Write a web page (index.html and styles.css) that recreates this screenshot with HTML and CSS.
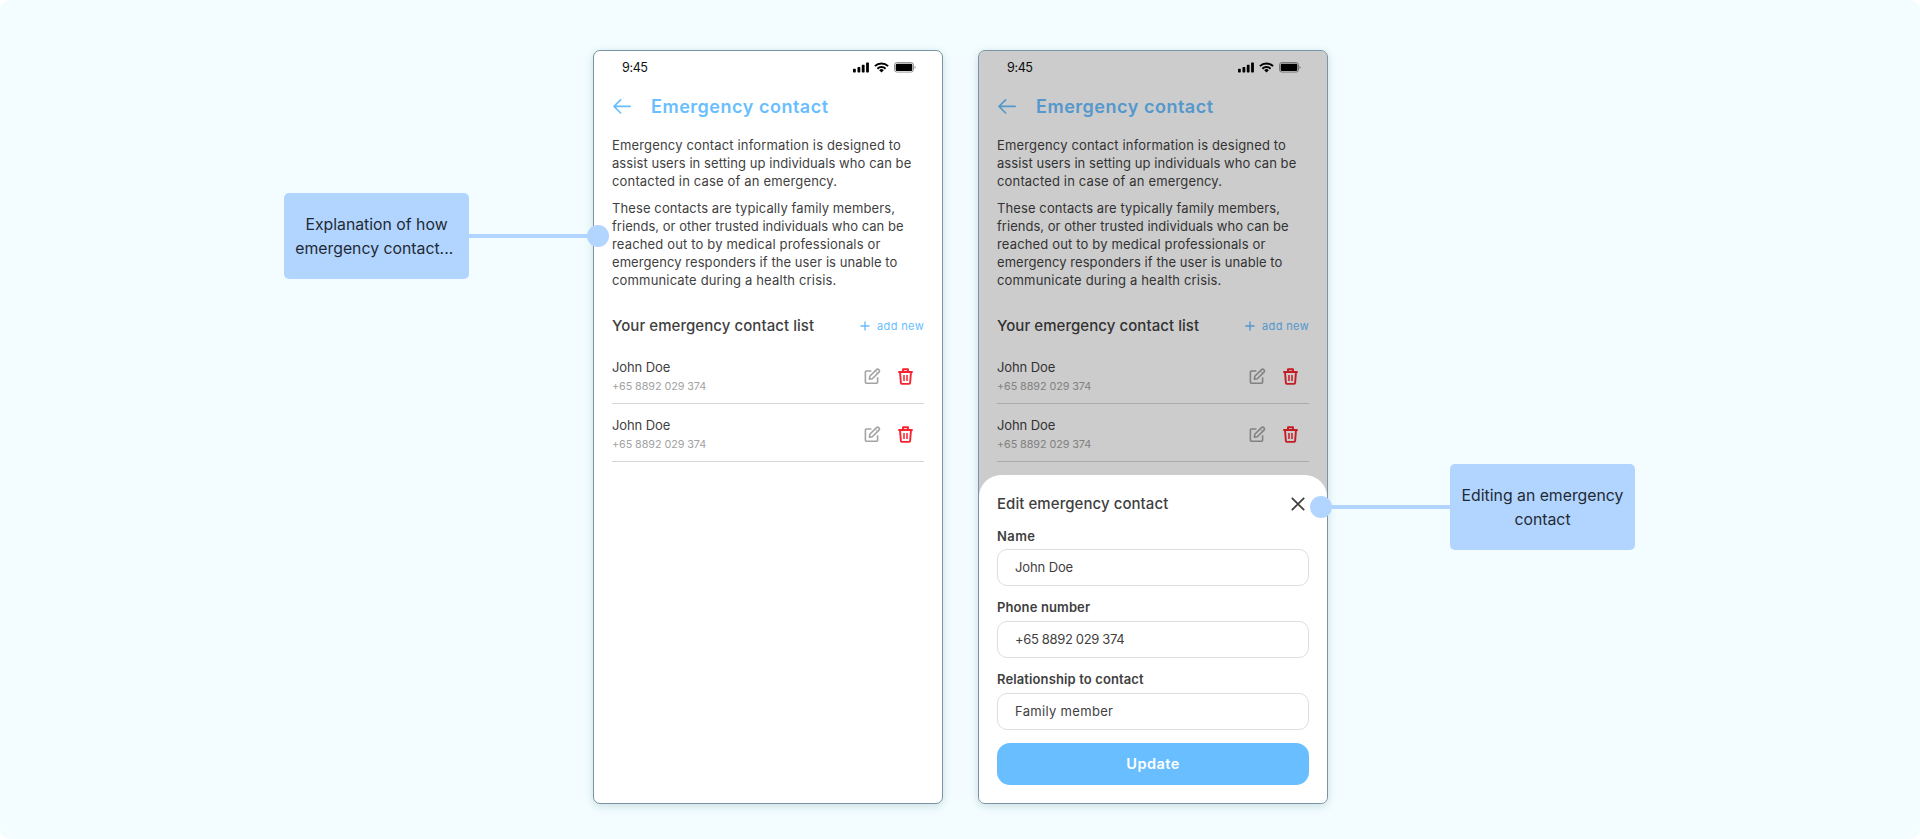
FILE: index.html
```html
<!DOCTYPE html>
<html lang="en">
<head>
<meta charset="utf-8">
<title>Emergency contact</title>
<link rel="stylesheet" href="styles.css">
</head>
<body>
<svg class="sprite" width="0" height="0" aria-hidden="true">
  <symbol id="signal" viewBox="0 0 17 11"><rect x="0" y="6.8" width="2.8" height="3.6" rx=".7"/><rect x="4.5" y="5" width="2.8" height="5.4" rx=".7"/><rect x="8.8" y="2.8" width="2.8" height="7.6" rx=".7"/><rect x="13.1" y=".4" width="2.8" height="10" rx=".7"/></symbol>
  <symbol id="wifi" viewBox="0 0 15 11"><path d="M.9 4.1a9.5 9.5 0 0 1 13.2 0" fill="none" stroke="currentColor" stroke-width="2"/><path d="M3.4 6.7a5.9 5.9 0 0 1 8.2 0" fill="none" stroke="currentColor" stroke-width="1.9"/><path d="M7.5 10.4 5.2 8.2a3.3 3.3 0 0 1 4.6 0z"/></symbol>
  <symbol id="battery" viewBox="0 0 22 11"><rect x=".5" y=".5" width="19" height="9.6" rx="2.4" fill="none" stroke="currentColor" stroke-opacity=".4"/><rect x="1.7" y="1.7" width="16.6" height="7.2" rx="1.2"/><path d="M20.6 3.7c1.3.6 1.3 2.6 0 3.2z" opacity=".5"/></symbol>
  <symbol id="back" viewBox="0 0 18 15"><path d="M17.2 7.4H1M7.6.9 1 7.4l6.6 6.6" fill="none" stroke="currentColor" stroke-width="1.6" stroke-linecap="round" stroke-linejoin="round"/></symbol>
  <symbol id="plus" viewBox="0 0 10 10"><path d="M5 .4v9.2M.4 5h9.2" fill="none" stroke="currentColor" stroke-width="1.4"/></symbol>
  <symbol id="edit" viewBox="0 0 17 17"><path d="M7.4 3H2.3a.9.9 0 0 0-.9.9v10.4c0 .5.4.9.9.9h10.4c.5 0 .9-.4.9-.9V9.2M5.4 11.2l.4-2.9 6.7-6.7a1.5 1.5 0 0 1 2.2 0l.3.3a1.5 1.5 0 0 1 0 2.2L8.3 10.8z" fill="none" stroke="currentColor" stroke-width="1.6" stroke-linejoin="round"/><path d="m11.4 3 2.2 2.2" fill="none" stroke="currentColor" stroke-width=".9"/></symbol>
  <symbol id="trash" viewBox="0 0 15 17"><path d="M.3 4h14.4M5 3.8V1.2h5v2.6M2 4l.9 11.1c0 .5.4.8.9.8h7.4c.5 0 .9-.3.9-.8L13 4" fill="none" stroke="currentColor" stroke-width="1.9" stroke-linejoin="round"/><path d="M6 7v6M9 7v6" fill="none" stroke="currentColor" stroke-width="1.5"/></symbol>
  <symbol id="close" viewBox="0 0 14 14"><path d="m.8.8 12.4 12.4M13.2.8.8 13.2" fill="none" stroke="currentColor" stroke-width="1.7"/></symbol>
</svg>

<main class="board">
  <div class="callout callout-left">Explanation of how<br>emergency contact...&nbsp;</div>
  <div class="connector connector-left"></div>

  <section class="phone">
    <div class="status"><span>9:45</span><span class="status-icons"><svg class="i-signal"><use href="#signal"/></svg><svg class="i-wifi"><use href="#wifi"/></svg><svg class="i-battery"><use href="#battery"/></svg></span></div>
    <header class="title"><svg class="i-back"><use href="#back"/></svg><h1>Emergency contact</h1></header>
    <div class="copy">
      <p><span class="loose">Emergency contact information is designed to</span><br>assist users in setting up individuals who can be<br><span class="loose">contacted in case of an emergency.</span></p>
      <p><span class="mid">These contacts are typically family members,</span><br><span class="tight">friends, or other trusted individuals who can be</span><br><span class="loose">reached out to by medical professionals or</span><br>emergency responders if the user is unable to<br><span class="loose">communicate during a health crisis.</span></p>
    </div>
    <div class="list-head"><h2>Your emergency contact list</h2><a class="add"><svg class="i-plus"><use href="#plus"/></svg>add new</a></div>
    <ul class="contacts">
      <li><div><div class="name">John Doe</div><div class="number">+65 8892 029 374</div></div><svg class="i-edit"><use href="#edit"/></svg><svg class="i-trash"><use href="#trash"/></svg></li>
      <li><div><div class="name">John Doe</div><div class="number">+65 8892 029 374</div></div><svg class="i-edit"><use href="#edit"/></svg><svg class="i-trash"><use href="#trash"/></svg></li>
    </ul>
  </section>

  <section class="phone phone-right">
    <div class="status"><span>9:45</span><span class="status-icons"><svg class="i-signal"><use href="#signal"/></svg><svg class="i-wifi"><use href="#wifi"/></svg><svg class="i-battery"><use href="#battery"/></svg></span></div>
    <header class="title"><svg class="i-back"><use href="#back"/></svg><h1>Emergency contact</h1></header>
    <div class="copy">
      <p><span class="loose">Emergency contact information is designed to</span><br>assist users in setting up individuals who can be<br><span class="loose">contacted in case of an emergency.</span></p>
      <p><span class="mid">These contacts are typically family members,</span><br><span class="tight">friends, or other trusted individuals who can be</span><br><span class="loose">reached out to by medical professionals or</span><br>emergency responders if the user is unable to<br><span class="loose">communicate during a health crisis.</span></p>
    </div>
    <div class="list-head"><h2>Your emergency contact list</h2><a class="add"><svg class="i-plus"><use href="#plus"/></svg>add new</a></div>
    <ul class="contacts">
      <li><div><div class="name">John Doe</div><div class="number">+65 8892 029 374</div></div><svg class="i-edit"><use href="#edit"/></svg><svg class="i-trash"><use href="#trash"/></svg></li>
      <li><div><div class="name">John Doe</div><div class="number">+65 8892 029 374</div></div><svg class="i-edit"><use href="#edit"/></svg><svg class="i-trash"><use href="#trash"/></svg></li>
    </ul>
    <div class="overlay">
      <div class="sheet">
        <div class="sheet-head"><h2>Edit emergency contact</h2><svg class="i-close"><use href="#close"/></svg></div>
        <div class="label wide">Name</div>
        <div class="field">John Doe</div>
        <div class="label">Phone number</div>
        <div class="field digits">+65 8892 029 374</div>
        <div class="label">Relationship to contact</div>
        <div class="field words">Family member</div>
        <div class="button">Update</div>
      </div>
    </div>
  </section>

  <div class="connector connector-right"></div>
  <div class="callout callout-right">Editing an emergency<br>contact</div>
</main>
</body>
</html>
```
FILE: styles.css
```css
* { box-sizing: border-box; margin: 0; padding: 0; }
body { background: #fff; font-family: Inter, "Liberation Sans", sans-serif; color: #3f3f3f; overflow: hidden; }
svg { display: block; flex: none; fill: currentColor; }
.sprite { position: absolute; }

.board { display: flex; align-items: flex-start; height: 839px; padding-left: 284px; background: #f3fdff; border-radius: 10px; white-space: nowrap; }

.callout { width: 185px; height: 86px; flex: none; display: flex; align-items: center; justify-content: center; text-align: center; border-radius: 5px; background: #b2d5ff; color: #1e2a35; font-size: 15.8px; font-weight: 400; line-height: 24px; padding-top: 2px; }
.callout-left { margin-top: 193px; }
.callout-right { margin-top: 464px; }

.connector { position: relative; height: 4px; flex: none; background: #b2d5ff; z-index: 2; }
.connector::after { content: ""; position: absolute; top: -9px; width: 22px; height: 22px; border-radius: 50%; background: #b2d5ff; }
.connector-left { width: 124px; margin-top: 234px; }
.connector-left::after { right: -16px; }
.connector-right { width: 122px; margin-top: 505px; }
.connector-right::after { left: -18px; }

.phone { position: relative; width: 350px; height: 754px; margin-top: 50px; flex: none; padding: 0 18px; border: 1px solid #7b94a5; border-radius: 7px; background: #fff; box-shadow: 0 2px 8px rgba(60, 110, 120, .22); overflow: hidden; }
.phone-right { margin-left: 35px; }

.status { display: flex; justify-content: space-between; align-items: center; height: 32px; padding: 0 8px 0 10px; color: #111; font-size: 12.6px; letter-spacing: -.4px; }
.status-icons { display: flex; align-items: center; gap: 5px; color: #000; }
.i-signal { width: 17px; height: 11px; }
.i-wifi { width: 15px; height: 11px; margin-left: -1px; }
.i-battery { width: 22px; height: 11px; }

.title { display: flex; align-items: center; height: 46px; gap: 20px; padding-left: 1px; color: #69beff; }
.title h1 { font-size: 18px; font-weight: 600; letter-spacing: .52px; line-height: 24px; padding-top: 1px; }
.i-back { width: 18px; height: 15px; }

.copy { padding-top: 7px; font-size: 13px; line-height: 18px; letter-spacing: .07px; }
.copy p + p { margin-top: 9px; }
.copy .loose { letter-spacing: .16px; }
.copy .mid { letter-spacing: .1px; }
.copy .tight { letter-spacing: .026px; }

.list-head { display: flex; align-items: center; justify-content: space-between; height: 24px; margin-top: 25px; }
.list-head h2, .sheet-head h2 { font-size: 15px; font-weight: 500; letter-spacing: .06px; line-height: 24px; }
.add { display: flex; align-items: center; gap: 7px; color: #69beff; font-size: 11px; letter-spacing: .36px; }
.i-plus { width: 10px; height: 10px; }

.contacts { list-style: none; padding-top: 8px; }
.contacts li { display: flex; align-items: center; height: 58px; padding: 4px 11px 0 0; border-bottom: 1px solid #d6d6d6; }
.contacts li > div { flex: 1; }
.name { font-size: 13px; line-height: 20px; letter-spacing: -.1px; }
.number { font-size: 10.8px; line-height: 18px; letter-spacing: -.08px; color: #a3a3a3; padding-top: 1px; }
.i-edit { width: 17px; height: 17px; color: #a3a3a3; margin-right: 17px; }
.i-trash { width: 15px; height: 17px; color: #f7232f; }

.overlay { position: absolute; inset: 0; display: flex; flex-direction: column; justify-content: flex-end; background: rgba(0, 0, 0, .2); }
.sheet { height: 328px; padding: 17px 18px 0; background: #fff; border-radius: 22px 22px 0 0; }
.sheet-head { display: flex; justify-content: space-between; align-items: center; padding-right: 4px; height: 24px; }
.i-close { width: 14px; height: 14px; }
.label { font-size: 13px; font-weight: 600; line-height: 20px; height: 35px; padding-top: 11px; letter-spacing: .12px; }
.field { height: 37px; border: 1px solid #dedede; border-radius: 10px; padding-left: 17px; line-height: 34px; font-size: 13px; letter-spacing: -.12px; }
.digits { letter-spacing: -.35px; }
.words { letter-spacing: .32px; }
.label.wide { height: 33px; padding-top: 10px; letter-spacing: .42px; }
.button { height: 42px; margin-top: 13px; border-radius: 13px; background: #69beff; color: #fff; text-align: center; font-size: 14.5px; font-weight: 600; line-height: 42px; letter-spacing: .45px; }
```
